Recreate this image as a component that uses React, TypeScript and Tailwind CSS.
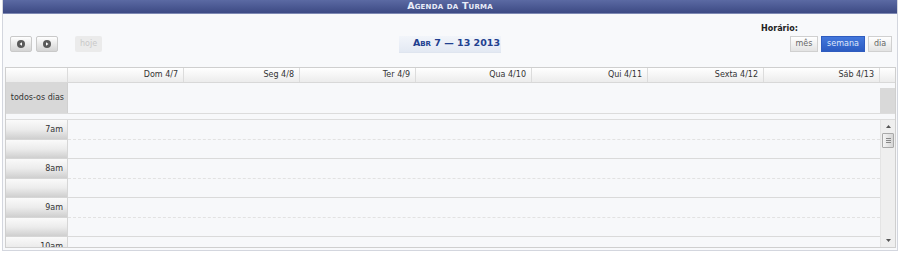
import React from 'react';

const days = ['Dom 4/7', 'Seg 4/8', 'Ter 4/9', 'Qua 4/10', 'Qui 4/11', 'Sexta 4/12', 'Sáb 4/13'];
const hours = ['7am', '8am', '9am', '10am'];

const NavButton: React.FC<{ dir: 'left' | 'right' }> = ({ dir }) => (
  <button className="flex h-[16px] w-[22px] items-center justify-center rounded-[2px] border border-[#c9c9c9] bg-gradient-to-b from-white to-[#d4d4d4]">
    <svg width="8" height="8" viewBox="0 0 9 9">
      <circle cx="4.5" cy="4.5" r="4.5" fill="#5a5a5a" />
      {dir === 'left' ? (
        <path d="M5.6 2.4 L2.9 4.5 L5.6 6.6 Z" fill="#fff" />
      ) : (
        <path d="M3.4 2.4 L6.1 4.5 L3.4 6.6 Z" fill="#fff" />
      )}
    </svg>
  </button>
);

const GutterSlot: React.FC<{ label?: string; h: string; dashed?: boolean }> = ({ label, h, dashed }) => (
  <div className={`flex ${h}`}>
    <div className="flex w-[62px] items-start justify-end border-r border-b border-[#d6d6d6] bg-gradient-to-b from-[#fafafa] via-[#ececec] to-[#cfcfcf] pr-[4px] pt-[5px] text-[8px] leading-[10px] text-[#333]">
      {label}
    </div>
    <div className={`flex-1 border-b ${dashed ? 'border-dashed border-[#e2e2e2]' : 'border-[#dadada]'}`} />
  </div>
);

const App: React.FC = () => {
  return (
    <div className="h-[254px] w-[900px] bg-white" style={{ fontFamily: '"DejaVu Sans", Verdana, sans-serif' }}>
      <div className="ml-[2px] w-[896px] border-x border-b border-[#d3d6de] bg-[#f8f9fb] pb-[2px]">
        {/* title bar */}
        <div className="flex h-[14px] items-center justify-center border-b border-[#7d88b3] bg-gradient-to-b from-[#5b6aa3] to-[#3d4a84] text-[9.5px] font-bold tracking-[0.2px] text-[#e8ecf8] [font-variant:small-caps]">
          Agenda da Turma
        </div>

        <div className="flex h-[20px] items-end justify-end pr-[99px] text-[8px] font-bold leading-[10px] text-[#222]">
          Horário:
        </div>

        {/* toolbar */}
        <div className="mt-[1px] flex h-[18px] items-center pl-[7px] pr-[5px]">
          <div className="flex w-[380px] items-center">
            <NavButton dir="left" />
            <div className="w-[4px]" />
            <NavButton dir="right" />
            <div className="ml-[17px] flex h-[16px] w-[27px] items-center justify-center rounded-[2px] bg-[#ebebeb] text-[8px] text-[#c9c9c9]">
              hoje
            </div>
          </div>
          <div className="ml-[9px] flex h-[17px] w-[102px] items-center justify-end border-b border-[#dfe5ef] bg-gradient-to-b from-[#f2f5fa] to-[#e3e9f3] pr-[1px] text-[9.5px] font-bold text-[#21408f] [font-variant:small-caps]">
            Abr 7 — 13 2013
          </div>
          <div className="flex flex-1 items-center justify-end gap-[3px]">
            <div className="flex h-[16px] w-[28px] items-center justify-center border border-[#d0d0d0] bg-gradient-to-b from-white to-[#e3e3e3] text-[8px] text-[#666]">
              mês
            </div>
            <div className="flex h-[16px] w-[44px] items-center justify-center border border-[#2f5cbf] bg-gradient-to-b from-[#4377dc] to-[#2c5cc2] text-[8px] text-[#dfe8fb]">
              semana
            </div>
            <div className="flex h-[16px] w-[24px] items-center justify-center border border-[#d0d0d0] bg-gradient-to-b from-white to-[#e3e3e3] text-[8px] text-[#666]">
              dia
            </div>
          </div>
        </div>

        {/* calendar */}
        <div className="ml-[2px] mt-[14px] w-[891px] border border-[#cfcfcf] bg-[#f7f8fa] text-[8px] text-[#333]">
          {/* header row */}
          <div className="flex h-[15px] border-b border-[#d8d8d8] bg-gradient-to-b from-white to-[#ececec]">
            <div className="w-[62px] border-r border-[#dcdcdc]" />
            {days.map((d) => (
              <div key={d} className="flex w-[116px] items-center justify-end border-r border-[#dcdcdc] pr-[5px] leading-[10px]">
                {d}
              </div>
            ))}
            <div className="flex-1" />
          </div>

          {/* all-day row */}
          <div className="flex h-[31px] border-b border-[#dcdcdc]">
            <div className="flex w-[62px] items-center justify-end whitespace-nowrap border-r border-[#d0d0d0] bg-[#d8d8d8] pr-[3px] leading-[10px]">
              todos-os dias
            </div>
            <div className="flex-1" />
            <div className="flex w-[15px] flex-col">
              <div className="h-[5px]" />
              <div className="flex-1 bg-[#d9d9d9]" />
            </div>
          </div>

          <div className="h-[6px] border-b border-[#dcdcdc]" />

          {/* time grid */}
          <div className="flex h-[127px] overflow-hidden">
            <div className="flex-1">
              {hours.map((h) => (
                <React.Fragment key={h}>
                  <GutterSlot label={h} h="h-[20px]" dashed />
                  <GutterSlot h="h-[19px]" />
                </React.Fragment>
              ))}
            </div>
            <div className="relative w-[15px] border-l border-[#e4e4e4] bg-[#efefef]">
              <svg className="absolute left-[4px] top-[4px]" width="7" height="5" viewBox="0 0 7 5">
                <path d="M3.5 1 L6 4 L1 4 Z" fill="#555" />
              </svg>
              <div className="absolute left-[1px] top-[13px] flex h-[15px] w-[12px] flex-col items-center justify-center gap-[1px] rounded-[1px] border border-[#a9a9a9] bg-gradient-to-r from-[#f4f4f4] to-[#d6d6d6]">
                <div className="h-px w-[5px] bg-[#888]" />
                <div className="h-px w-[5px] bg-[#888]" />
                <div className="h-px w-[5px] bg-[#888]" />
              </div>
              <svg className="absolute bottom-[4px] left-[4px]" width="7" height="5" viewBox="0 0 7 5">
                <path d="M3.5 4 L6 1 L1 1 Z" fill="#555" />
              </svg>
            </div>
          </div>
        </div>
      </div>
    </div>
  );
};

export default App;
